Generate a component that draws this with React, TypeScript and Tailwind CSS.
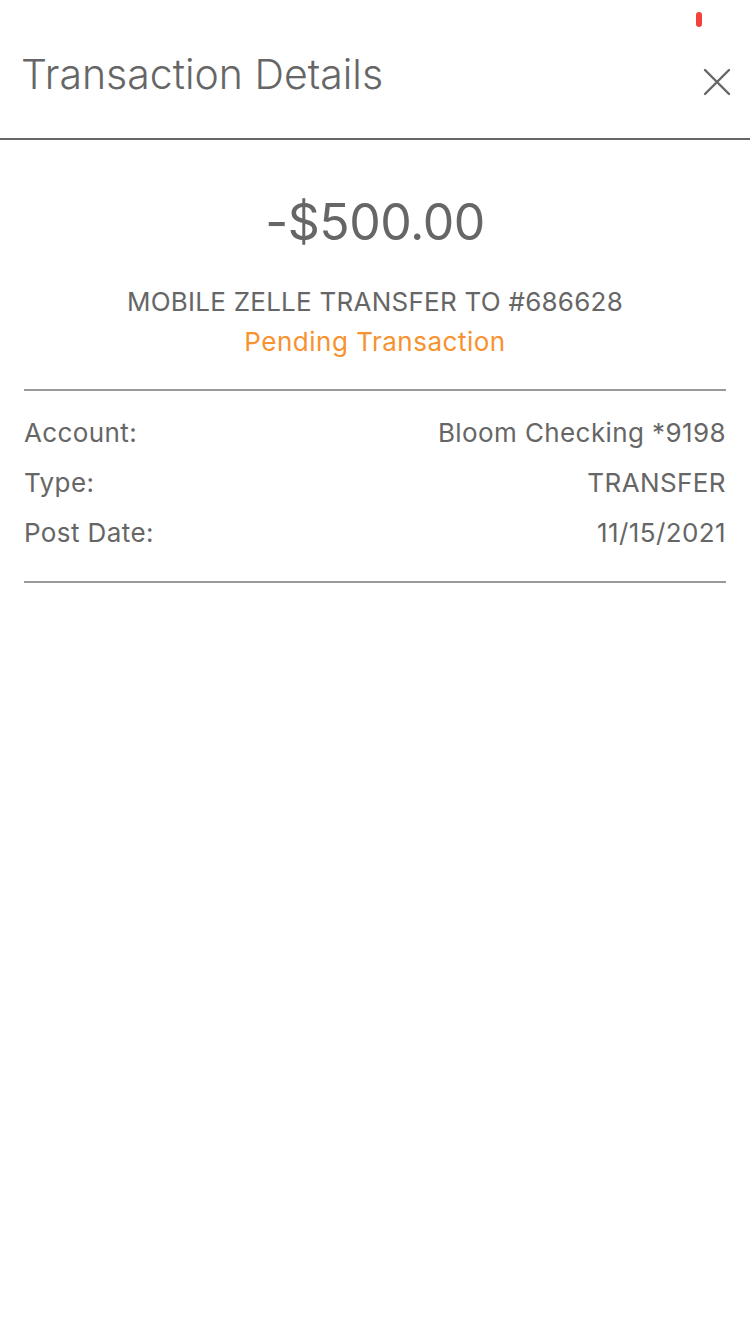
const rows = [
  { label: "Account:", value: "Bloom Checking *9198" },
  { label: "Type:", value: "TRANSFER" },
  { label: "Post Date:", value: "11/15/2021" },
];

const App = () => {
  return (
    <main className="w-[750px] min-h-[1334px] bg-white text-[#666666] font-['Inter','Roboto',sans-serif]">
      <header className="relative h-[140px] border-b-2 border-[#666666]">
        <div className="absolute left-[696px] top-[12px] w-[6px] h-[15px] rounded-full bg-[#f2413a]" />
        <div className="flex items-center justify-between pl-[21px] pr-[18px] pt-[50px]">
          <h1 className="text-[41px] font-light leading-[48px] tracking-[0px]">Transaction Details</h1>
          <button className="mt-[16px] w-[30px] h-[30px] flex items-center justify-center">
            <svg width="30" height="30" viewBox="0 0 30 30" fill="none" stroke="#666666" strokeWidth="2.4" strokeLinecap="round">
              <path d="M3 3 L27 27 M27 3 L3 27" />
            </svg>
          </button>
        </div>
      </header>

      <section className="flex flex-col items-center pt-[52px]">
        <div className="text-[50px] leading-[60px] font-normal tracking-[-0.5px]">-$500.00</div>
        <div className="mt-[30px] text-[26px] leading-[40px] tracking-[0.25px]">MOBILE ZELLE TRANSFER TO #686628</div>
        <div className="text-[26px] leading-[40px] tracking-[0.5px] text-[#f7922f]">Pending Transaction</div>
      </section>

      <section className="mx-[24px] mt-[27px] border-t-2 border-b-2 border-[#999999] pt-[17px] pb-[23px]">
        {rows.map((r) => (
          <div key={r.label} className="flex justify-between text-[26px] leading-[50px] tracking-[0.4px]">
            <span>{r.label}</span>
            <span>{r.value}</span>
          </div>
        ))}
      </section>
    </main>
  );
};

export default App;
